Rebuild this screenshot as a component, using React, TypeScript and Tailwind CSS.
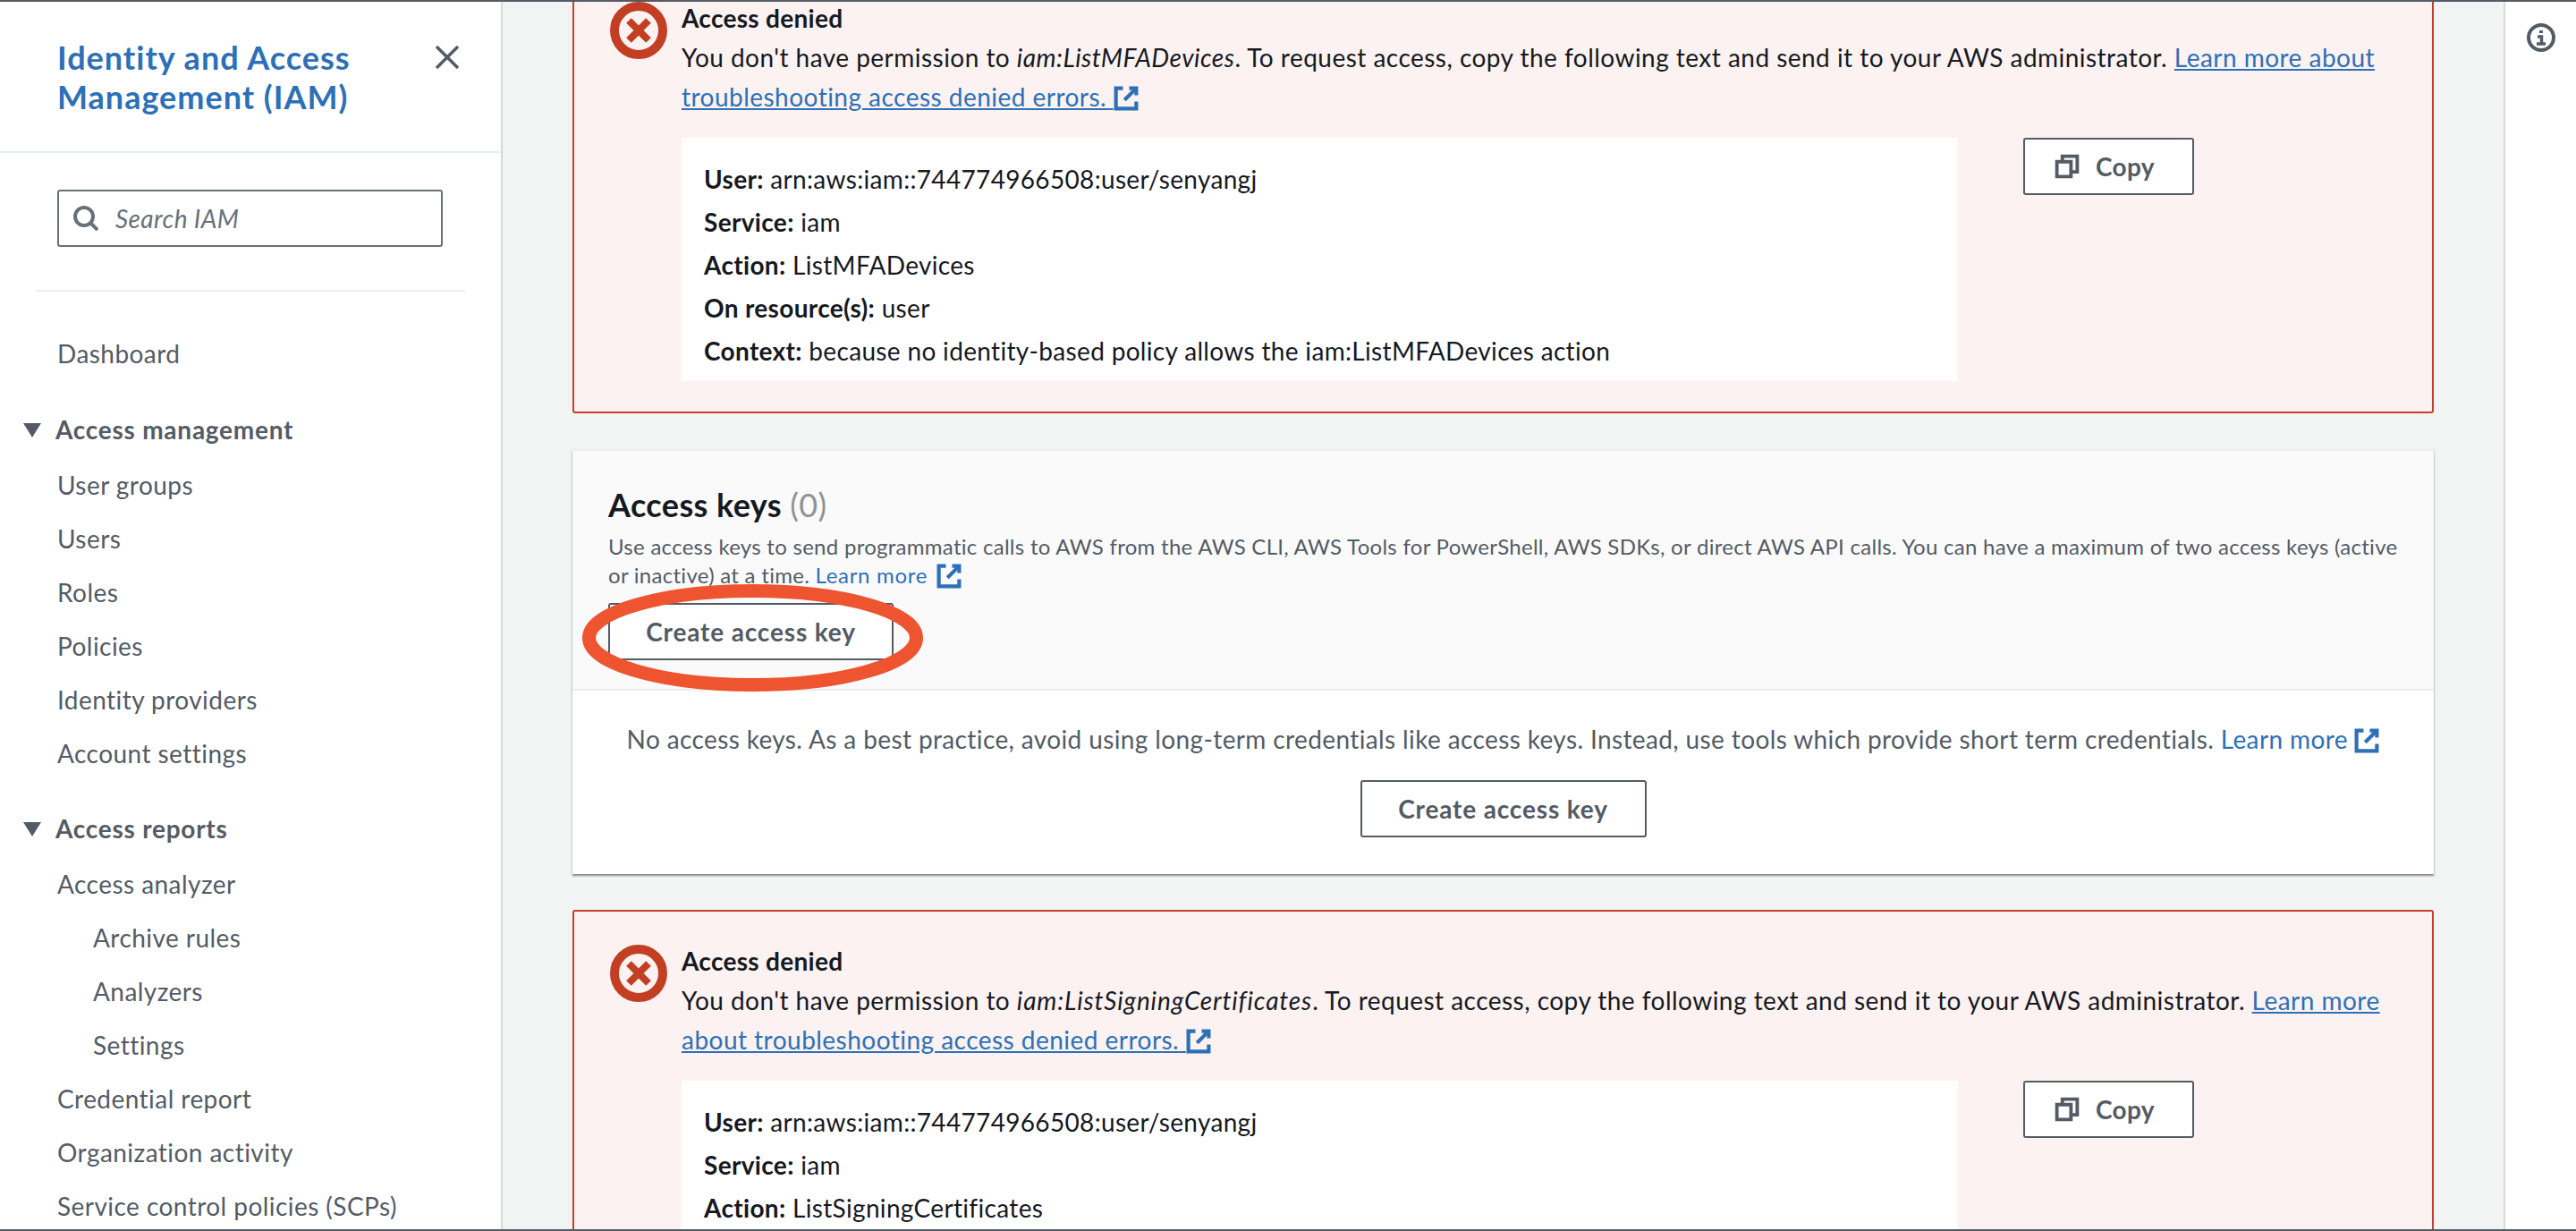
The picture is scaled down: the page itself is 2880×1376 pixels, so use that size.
const font = "font-['Lato','Noto_Sans',sans-serif]";

const ExternalIcon = ({ className = "" }: { className?: string }) => (
  <svg viewBox="0 0 16 16" fill="none" stroke="#2d70b7" strokeWidth="2.4" className={`inline-block w-[28px] h-[28px] ${className}`}>
    <path d="M10 1.5h4.5V6" />
    <path d="M14.5 1.5 7 9" />
    <path d="M6 1.5H1.5v13h13V10" />
  </svg>
);

const ErrorIcon = () => (
  <svg viewBox="0 0 64 64" className="w-16 h-16 shrink-0" fill="none" stroke="#c23f23">
    <circle cx="32" cy="32" r="27" strokeWidth="10" />
    <path d="M21 21l22 22M43 21 21 43" strokeWidth="8" />
  </svg>
);

const CopyIcon = () => (
  <svg viewBox="0 0 16 16" fill="none" stroke="#545b64" strokeWidth="2.2" className="w-[28px] h-[28px]">
    <path d="M1.5 5h9v9.5h-9z" />
    <path d="M5 4.5V1.5h9.5v10h-3.5" />
  </svg>
);

const Btn = ({ children, className = "" }: { children: React.ReactNode; className?: string }) => (
  <button className={`h-16 flex items-center border-2 border-[#545b64] rounded-[3px] bg-white text-[28px] font-bold text-[#545b64] ${className}`}>
    {children}
  </button>
);

type Row = [string, string];

const AccessDenied = ({ action, actionClass = "", link, rows, className = "" }: { action: string; actionClass?: string; link: string; rows: Row[]; className?: string }) => (
  <div className={`border-2 border-[#c5402a] rounded-[3px] bg-[#fbf2f1] pl-[40px] pt-[37px] pb-[34px] flex gap-4 ${className}`}>
    <ErrorIcon />
    <div className="flex-1 min-w-0 pr-[24px]">
      <div className="text-[28px] font-bold leading-[36px] tracking-[0.3px] text-[#16191f]">Access denied</div>
      <p className="text-[28px] leading-[44px] tracking-[0.47px] text-[#16191f] mt-[4px]">
        You don't have permission to <i className={actionClass}>iam:{action}</i>. To request access, copy the following text and send it to your AWS administrator.{" "}
        <a className="text-[#2d70b7] underline">{link}&nbsp;</a>
        <ExternalIcon className="align-[-5px]" />
      </p>
      <div className="flex items-start mt-[24px]">
        <div className="w-[1427px] bg-white px-[25px] pt-[22px] pb-[10px]">
          {rows.map(([k, v]) => (
            <div key={k} className="h-[48px] leading-[48px] text-[28px] tracking-[0.33px] text-[#16191f]">
              <b>{k}:</b> {v}
            </div>
          ))}
        </div>
        <Btn className="w-[191px] ml-[73px] pl-[33px] gap-[18px] tracking-[0.3px]">
          <CopyIcon />
          Copy
        </Btn>
      </div>
    </div>
  </div>
);

const NavItem = ({ label, sub, className = "" }: { label: string; sub?: boolean; className?: string }) => (
  <div className={`h-[60px] flex items-center text-[28px] tracking-[0.45px] text-[#545b64] ${sub ? "pl-[104px]" : "pl-[64px]"} ${className}`}>{label}</div>
);

const NavHead = ({ label, className }: { label: string; className: string }) => (
  <div className={`h-[61px] flex items-center text-[28px] font-bold tracking-[0.75px] text-[#545b64] ${className}`}>
    <svg viewBox="0 0 20 16" className="w-5 h-4 ml-[26px] mr-[16px]" fill="#545b64">
      <path d="M0 0h20L10 16z" />
    </svg>
    <span className="-mt-[2px]">{label}</span>
  </div>
);

export default function App() {
  return (
    <div className={`h-[1376px] w-[2880px] overflow-hidden flex flex-col bg-[#f2f3f3] ${font}`}>
      <div className="h-[2px] bg-[#545b64] shrink-0 relative z-20" />
      <div className="flex flex-1 min-h-0">
        <aside className="w-[562px] shrink-0 bg-white border-r-2 border-[#d5dbdb] overflow-hidden">
          <div className="h-[169px] border-b-2 border-[#eaeded] pl-[64px] pr-[44px] pt-[40px] flex justify-between items-start">
            <div className="text-[36px] leading-[44px] font-bold tracking-[1px] text-[#2d70b7]">
              Identity and Access
              <br />
              Management (IAM)
            </div>
            <svg viewBox="0 0 26 26" className="w-[26px] h-[26px] mt-[9px] mr-[3px]" fill="none" stroke="#545b64" strokeWidth="3.5">
              <path d="M1 1l24 24M25 1 1 25" />
            </svg>
          </div>
          <div className="px-[40px] pt-[41px]">
            <div className="mx-[24px] h-16 w-[431px] border-2 border-[#687078] rounded-[3px] flex items-center pl-[16px] gap-[19px]">
              <svg viewBox="0 0 28 28" className="w-[28px] h-[28px]" fill="none" stroke="#687078" strokeWidth="4">
                <circle cx="12" cy="12" r="10" />
                <path d="M19 19l8 8" />
              </svg>
              <span className="text-[28px] italic tracking-[0.4px] text-[#687078]">Search IAM</span>
            </div>
            <div className="mt-[48px] h-[2px] bg-[#eaeded]" />
          </div>
          <nav className="mt-[40px]">
            <NavItem label="Dashboard" className="pb-[2px]" />
            <NavHead label="Access management" className="mt-[24px]" />
            <div className="mt-[1px]">
              {["User groups", "Users", "Roles", "Policies", "Identity providers", "Account settings"].map((l) => (
                <NavItem key={l} label={l} />
              ))}
            </div>
            <NavHead label="Access reports" className="mt-[24px]" />
            <div className="mt-[1px]">
              <NavItem label="Access analyzer" />
              <NavItem label="Archive rules" sub />
              <NavItem label="Analyzers" sub />
              <NavItem label="Settings" sub />
              <NavItem label="Credential report" />
              <NavItem label="Organization activity" />
              <NavItem label="Service control policies (SCPs)" />
            </div>
          </nav>
        </aside>

        <main className="flex-1 min-w-0 overflow-hidden px-[78px] -mt-[39px]">
          <AccessDenied
            action="ListMFADevices"
            link="Learn more about troubleshooting access denied errors."
            rows={[
              ["User", "arn:aws:iam::744774966508:user/senyangj"],
              ["Service", "iam"],
              ["Action", "ListMFADevices"],
              ["On resource(s)", "user"],
              ["Context", "because no identity-based policy allows the iam:ListMFADevices action"],
            ]}
          />

          <section className="mt-[40px] bg-white border-t-2 border-[#eaeded] shadow-[0_2px_2px_rgba(84,91,100,0.7)]">
            <div className="relative h-[268px] bg-[#fafafa] border-b-2 border-[#eaeded] pl-[40px] pr-[38px] pt-[40px]">
              <h2 className="text-[36px] leading-[40px] font-bold tracking-[0.4px] text-[#16191f]">
                Access keys <span className="font-normal text-[#8d9396]">(0)</span>
              </h2>
              <p className="text-[24px] leading-[32px] tracking-[0.28px] text-[#545b64] mt-[11px]">
                Use access keys to send programmatic calls to AWS from the AWS CLI, AWS Tools for PowerShell, AWS SDKs, or direct AWS API calls. You can have a maximum of two access keys (active or inactive) at a time.{" "}
                <a className="text-[#2d70b7] tracking-[0.7px]">Learn more</a> <ExternalIcon className="align-[-6px] ml-[3px]" />
              </p>
              <Btn className="w-[319px] mt-[15px] justify-center tracking-[0.85px]">Create access key</Btn>
              <svg viewBox="0 0 381 120" className="absolute left-[11px] top-[149px] w-[381px] h-[120px] z-10" fill="none" stroke="#ee5430" strokeWidth="15">
                <ellipse cx="190.5" cy="60" rx="183" ry="52.5" />
              </svg>
            </div>
            <div className="h-[205px] flex flex-col items-center pt-[36px]">
              <p className="text-[28px] leading-[36px] tracking-[0.38px] text-[#545b64]">
                No access keys. As a best practice, avoid using long-term credentials like access keys. Instead, use tools which provide short term credentials.{" "}
                <a className="text-[#2d70b7]">Learn more</a> <ExternalIcon className="align-[-5px]" />
              </p>
              <Btn className="w-[320px] mt-[28px] justify-center tracking-[0.85px]">Create access key</Btn>
            </div>
          </section>

          <AccessDenied
            className="mt-[40px]"
            action="ListSigningCertificates"
            actionClass="tracking-[0.87px]"
            link="Learn more about troubleshooting access denied errors."
            rows={[
              ["User", "arn:aws:iam::744774966508:user/senyangj"],
              ["Service", "iam"],
              ["Action", "ListSigningCertificates"],
              ["On resource(s)", "user"],
            ]}
          />
        </main>

        <div className="w-[81px] shrink-0 bg-white border-l-2 border-[#d5dbdb] flex justify-center pt-[24px]">
          <svg viewBox="0 0 32 32" className="w-8 h-8 mr-[-1px]" fill="none" stroke="#545b64">
            <circle cx="16" cy="16" r="14" strokeWidth="4" />
            <path d="M16 8v3" strokeWidth="4" />
            <path d="M12 15h4.5v8M11 23h10" strokeWidth="3.5" />
          </svg>
        </div>
      </div>
      <div className="h-[2px] bg-[#545b64] shrink-0 relative z-20" />
    </div>
  );
}
